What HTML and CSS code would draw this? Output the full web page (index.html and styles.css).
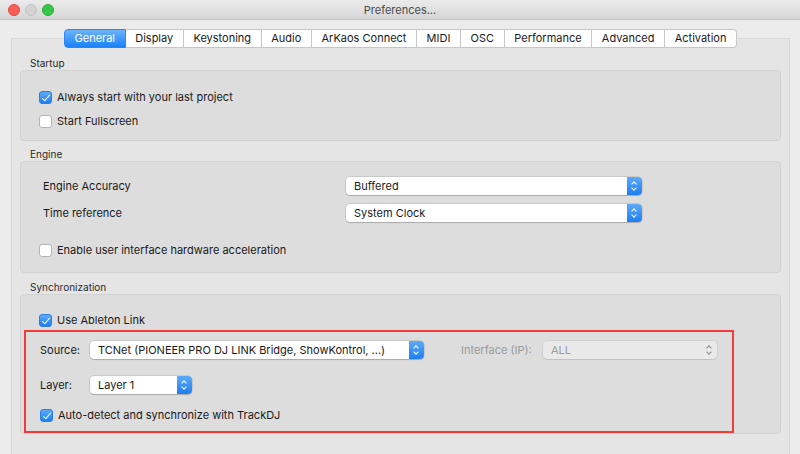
FILE: index.html
```html
<!DOCTYPE html>
<html lang="en">
<head>
<meta charset="utf-8">
<title>Preferences...</title>
<link rel="stylesheet" href="styles.css">
</head>
<body>
<div class="window">
  <div class="titlebar">
    <div class="lights">
      <span class="light red"></span>
      <span class="light grey"></span>
      <span class="light green"></span>
    </div>
    <div class="title">Preferences...</div>
  </div>

  <div class="body">
    <div class="tabview">
      <div class="tabs">
        <span class="tab active">General</span>
        <span class="tab">Display</span>
        <span class="tab">Keystoning</span>
        <span class="tab">Audio</span>
        <span class="tab">ArKaos Connect</span>
        <span class="tab">MIDI</span>
        <span class="tab">OSC</span>
        <span class="tab">Performance</span>
        <span class="tab">Advanced</span>
        <span class="tab">Activation</span>
      </div>

      <div class="group-label first">Startup</div>
      <div class="group startup">
        <label class="check"><span class="box on"></span>Always start with your last project</label>
        <label class="check"><span class="box"></span>Start Fullscreen</label>
      </div>

      <div class="group-label">Engine</div>
      <div class="group engine">
        <div class="field">
          <span class="field-label">Engine Accuracy</span>
          <div class="select wide"><span>Buffered</span><i class="arrows"></i></div>
        </div>
        <div class="field">
          <span class="field-label">Time reference</span>
          <div class="select wide"><span>System Clock</span><i class="arrows"></i></div>
        </div>
        <label class="check spaced"><span class="box"></span>Enable user interface hardware acceleration</label>
      </div>

      <div class="group-label sync-title">Synchronization</div>
      <div class="group sync">
        <label class="check ableton"><span class="box on"></span>Use Ableton Link</label>
        <div class="highlight">
          <div class="sync-row">
            <span class="sync-label">Source:</span>
            <div class="select source"><span>TCNet (PIONEER PRO DJ LINK Bridge, ShowKontrol, ...)</span><i class="arrows"></i></div>
            <span class="sync-label muted">Interface (IP):</span>
            <div class="select disabled"><span>ALL</span><i class="arrows"></i></div>
          </div>
          <div class="sync-row layer">
            <span class="sync-label">Layer:</span>
            <div class="select layer-select"><span>Layer 1</span><i class="arrows"></i></div>
          </div>
          <label class="check"><span class="box on"></span>Auto-detect and synchronize with TrackDJ</label>
        </div>
      </div>
    </div>
  </div>
</div>
</body>
</html>
```

FILE: styles.css
```css
*{box-sizing:border-box;}
html,body{margin:0;height:100%;overflow:hidden;}
body{font-family:Inter,"Liberation Sans",sans-serif;font-size:11px;color:#1a1a1a;background:#ececec;}

.window{width:800px;height:454px;background:#ececec;}

/* barra de titulo */
.titlebar{height:20px;position:relative;display:flex;align-items:center;justify-content:center;
  background:linear-gradient(#ebebeb,#d6d6d6);border-bottom:1px solid #c4c4c4;}
.lights{position:absolute;left:8px;top:4px;display:flex;gap:5px;}
.light{width:12px;height:12px;border-radius:50%;}
.red{background:#fc5f57;border:1px solid #e2463f;}
.grey{background:#d3d3d3;border:1px solid #c2c2c2;}
.green{background:#34c749;border:1px solid #27aa35;}
.title{font-size:11px;color:#4c4c4c;}

.body{padding:18px 10px 0 11px;}

/* tab view */
.tabview{background:#e5e5e5;border:1px solid #d9d9d9;border-bottom:none;height:420px;padding:0 8px;}
.tabs{display:flex;justify-content:center;margin-top:-10px;}
.tab{height:19px;line-height:17px;padding:0 9.6px;background:#fff;border:1px solid #c6c6c6;border-left:none;
  color:#1a1a1a;white-space:nowrap;}
.tab:first-child{border-left:1px solid #c6c6c6;border-radius:4px 0 0 4px;}
.tab:last-child{border-radius:0 4px 4px 0;}
.tab.active{background:linear-gradient(#6cb3fa,#1a82fb);color:#fff;border-color:#2d86f0;}

.group-label{font-size:10px;color:#2a2a2a;padding-left:10px;line-height:12px;margin-top:7px;margin-bottom:1px;}
.group-label.first{margin-top:9px;}
.group-label.sync-title{margin-top:8px;}
.group{background:#dddddd;border:1px solid #d2d2d2;border-radius:4px;}
.startup{padding:14px 18px 7px;}
.engine{padding:10px 22px 10px;}
.sync{padding:15px 2px 0 2px;}

.check{display:flex;align-items:center;gap:5px;height:24px;white-space:nowrap;}
.engine .check{margin-left:-4px;}
.check.spaced{margin-top:12px;}
.ableton{height:20px;}
.box{width:13px;height:13px;border-radius:3px;background:#fff;border:1px solid #b4b4b4;flex:none;position:relative;}
.box.on{background:linear-gradient(#5eaaf9,#1c7ef2);border-color:#2a7fe0;}
.box.on::after{content:"";position:absolute;left:3.5px;top:1px;width:3px;height:7px;border:solid #fff;
  border-width:0 1.6px 1.6px 0;transform:rotate(40deg);}

.field{display:flex;align-items:center;height:27px;}
.field-label{width:303px;}

/* selects */
.select{height:18px;background:#fff;border-radius:4px;display:flex;align-items:center;
  box-shadow:0 0 0 0.5px rgba(0,0,0,.18),0 1px 1px rgba(0,0,0,.15);position:relative;overflow:hidden;}
.select span{flex:1;padding-left:8px;white-space:nowrap;}
.arrows{width:15px;height:18px;flex:none;background:linear-gradient(#5eaaf9,#1c7ef2);position:relative;}
.arrows::before,.arrows::after{content:"";position:absolute;left:5px;width:3px;height:3px;border:solid #fff;border-width:1.3px 0 0 1.3px;}
.arrows::before{top:5px;transform:rotate(45deg);}
.arrows::after{top:9px;transform:rotate(-135deg);}
.wide{width:296px;}

.highlight{border:2px solid #f23b3b;padding:6px 14px 4px;width:710px;margin-left:1px;}
.sync .check{padding-left:16px;}
.highlight .check{padding-left:0;}
.sync-row{display:flex;align-items:center;height:24px;}
.sync-row.layer{margin:11px 0 6px;}
.sync-label{width:50px;white-space:nowrap;}
.source{width:334px;}
.layer-select{width:102px;}
.muted{color:#9a9a9a;width:82px;margin-left:37px;}
.disabled{width:174px;background:#e9e9e9;color:#9a9a9a;box-shadow:0 0 0 0.5px rgba(0,0,0,.1),0 1px 1px rgba(0,0,0,.08);}
.disabled .arrows{background:none;}
.disabled .arrows::before,.disabled .arrows::after{border-color:#8d8d8d;}
```
